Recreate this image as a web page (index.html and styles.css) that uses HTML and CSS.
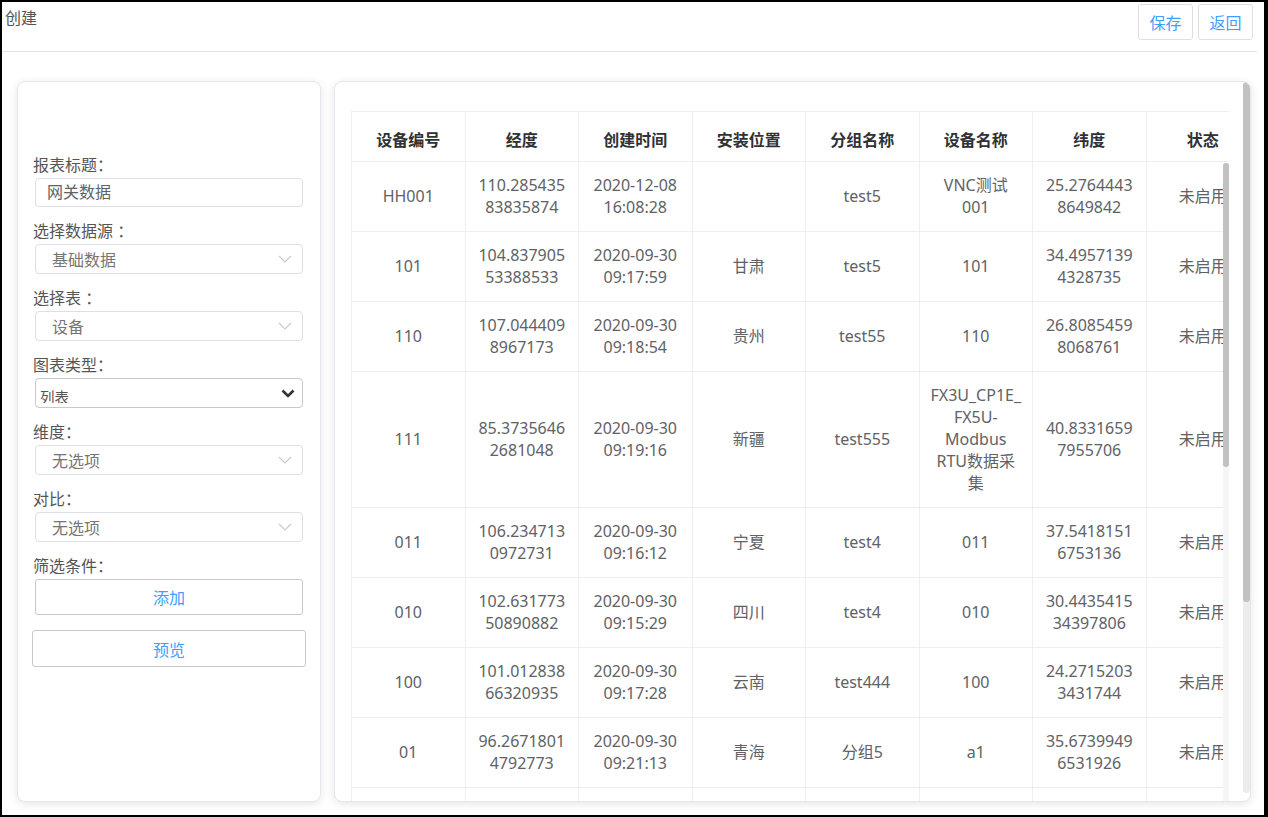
FILE: index.html
```html
<!DOCTYPE html>
<html lang="zh-CN">
<head>
<meta charset="utf-8">
<title>创建</title>
<link rel="stylesheet" href="styles.css">
</head>
<body>
<div class="frame">
  <div class="header">
    <div class="title">创建</div>
    <div class="actions">
      <button class="btn">保存</button>
      <button class="btn">返回</button>
    </div>
  </div>
  <div class="content">
    <div class="card left-card">
      <div class="group">
        <div class="label">报表标题：</div>
        <div class="input">网关数据</div>
      </div>
      <div class="group">
        <div class="label">选择数据源 ：</div>
        <div class="select"><span>基础数据</span><svg class="chev" width="14" height="8" viewBox="0 0 14 8"><path d="M1 1l6 6 6-6" fill="none" stroke="#c8cbd2" stroke-width="1.2"/></svg></div>
      </div>
      <div class="group">
        <div class="label">选择表 ：</div>
        <div class="select"><span>设备</span><svg class="chev" width="14" height="8" viewBox="0 0 14 8"><path d="M1 1l6 6 6-6" fill="none" stroke="#c8cbd2" stroke-width="1.2"/></svg></div>
      </div>
      <div class="group">
        <div class="label">图表类型：</div>
        <div class="native-select"><div class="native-val">列表</div><svg class="nchev" width="14" height="9" viewBox="0 0 14 9"><path d="M1.5 1.5l5.5 5.5 5.5-5.5" fill="none" stroke="#333" stroke-width="2.6"/></svg></div>
      </div>
      <div class="group">
        <div class="label">维度：</div>
        <div class="select"><span>无选项</span><svg class="chev" width="14" height="8" viewBox="0 0 14 8"><path d="M1 1l6 6 6-6" fill="none" stroke="#c8cbd2" stroke-width="1.2"/></svg></div>
      </div>
      <div class="group">
        <div class="label">对比：</div>
        <div class="select"><span>无选项</span><svg class="chev" width="14" height="8" viewBox="0 0 14 8"><path d="M1 1l6 6 6-6" fill="none" stroke="#c8cbd2" stroke-width="1.2"/></svg></div>
      </div>
      <div class="group last">
        <div class="label">筛选条件：</div>
        <button class="wide-btn">添加</button>
      </div>
      <button class="preview-btn">预览</button>
    </div>
    <div class="card right-card">
      <div class="table-wrap">
        <table class="grid">
          <colgroup><col><col><col><col><col><col><col><col></colgroup>
          <thead>
            <tr><th>设备编号</th><th>经度</th><th>创建时间</th><th>安装位置</th><th>分组名称</th><th>设备名称</th><th>纬度</th><th>状态</th></tr>
          </thead>
          <tbody>
            <tr><td>HH001</td><td>110.285435<br>83835874</td><td>2020-12-08<br>16:08:28</td><td></td><td>test5</td><td>VNC测试<br>001</td><td>25.2764443<br>8649842</td><td>未启用</td></tr>
            <tr><td>101</td><td>104.837905<br>53388533</td><td>2020-09-30<br>09:17:59</td><td>甘肃</td><td>test5</td><td>101</td><td>34.4957139<br>4328735</td><td>未启用</td></tr>
            <tr><td>110</td><td>107.044409<br>8967173</td><td>2020-09-30<br>09:18:54</td><td>贵州</td><td>test55</td><td>110</td><td>26.8085459<br>8068761</td><td>未启用</td></tr>
            <tr><td>111</td><td>85.3735646<br>2681048</td><td>2020-09-30<br>09:19:16</td><td>新疆</td><td>test555</td><td>FX3U_CP1E_<br>FX5U-<br>Modbus<br>RTU数据采<br>集</td><td>40.8331659<br>7955706</td><td>未启用</td></tr>
            <tr><td>011</td><td>106.234713<br>0972731</td><td>2020-09-30<br>09:16:12</td><td>宁夏</td><td>test4</td><td>011</td><td>37.5418151<br>6753136</td><td>未启用</td></tr>
            <tr><td>010</td><td>102.631773<br>50890882</td><td>2020-09-30<br>09:15:29</td><td>四川</td><td>test4</td><td>010</td><td>30.4435415<br>34397806</td><td>未启用</td></tr>
            <tr><td>100</td><td>101.012838<br>66320935</td><td>2020-09-30<br>09:17:28</td><td>云南</td><td>test444</td><td>100</td><td>24.2715203<br>3431744</td><td>未启用</td></tr>
            <tr><td>01</td><td>96.2671801<br>4792773</td><td>2020-09-30<br>09:21:13</td><td>青海</td><td>分组5</td><td>a1</td><td>35.6739949<br>6531926</td><td>未启用</td></tr>
            <tr class="blank"><td></td><td></td><td></td><td></td><td></td><td></td><td></td><td></td></tr>
          </tbody>
        </table>
        <div class="inner-track"><div class="inner-thumb"></div></div>
      </div>
      <div class="outer-track"><div class="outer-thumb"></div></div>
    </div>
  </div>
</div>
</body>
</html>
```
FILE: styles.css
```css
* { box-sizing: border-box; }
html, body { margin: 0; padding: 0; background: #fff; }
body {
  font-family: "Noto Sans", "Noto Sans CJK SC", sans-serif;
  font-size: 16px;
  color: #606266;
}
.frame {
  width: 1268px;
  height: 817px;
  border: 2px solid #000;
  border-right-width: 4px;
  background: #fff;
  display: flex;
  flex-direction: column;
  overflow: hidden;
}
.header {
  height: 50px;
  flex: none;
  margin-right: 7px;
  border-bottom: 1px solid #e4e4e4;
  display: flex;
  justify-content: space-between;
  align-items: flex-start;
  padding: 0 4px 0 3px;
}
.title {
  padding-top: 5px;
  line-height: 22px;
  font-size: 16px;
  color: #555;
}
.actions { display: flex; gap: 5px; padding-top: 2px; }
.btn {
  width: 55px;
  height: 36px;
  border: 1px solid #dcdfe6;
  border-radius: 3px;
  background: #fff;
  color: #409eff;
  font-family: inherit;
  font-size: 16px;
  padding: 0;
}
.content {
  display: flex;
  gap: 13px;
  padding: 29px 0 0 15px;
}
.card {
  height: 721px;
  border: 1px solid #e4e7ed;
  border-radius: 8px;
  background: #fff;
  box-shadow: 0 2px 10px rgba(0, 0, 0, 0.1);
}
.left-card {
  width: 304px;
  padding: 72px 15px 0 15px;
  display: flex;
  flex-direction: column;
}
.group { margin-bottom: 13px; }
.group.last { margin-bottom: 15px; }
.label {
  line-height: 22px;
  font-size: 16px;
  color: #555;
  margin-bottom: 2px;
}
.input, .select, .native-select {
  margin-left: 2px;
  width: 268px;
  height: 30px;
  border: 1px solid #dcdfe6;
  border-radius: 4px;
  background: #fff;
}
.input {
  height: 29px;
  padding-left: 11px;
  line-height: 27px;
  color: #606266;
  font-size: 16px;
}
.select {
  display: flex;
  align-items: center;
  justify-content: space-between;
  padding: 0 10px 0 16px;
  color: #757575;
  font-size: 16px;
}
.chev { display: block; }
.native-select {
  display: flex;
  justify-content: space-between;
  align-items: center;
  padding: 0 7px 4px 4px;
  border-color: #c9c9c9;
}
.native-val {
  height: 100%;
  overflow: hidden;
  padding-top: 9px;
  line-height: 18px;
  font-size: 14.5px;
  color: #555;
}
.nchev { display: block; margin-bottom: -4px; }
.wide-btn {
  margin-left: 2px;
  width: 268px;
  height: 36px;
  border: 1px solid #c9c9c9;
  border-radius: 3px;
  background: #fff;
  color: #409eff;
  font-family: inherit;
  font-size: 16px;
  padding: 0;
}
.preview-btn {
  margin-left: -1px;
  width: 274px;
  height: 37px;
  border: 1px solid #c9c9c9;
  border-radius: 3px;
  background: #fff;
  color: #409eff;
  font-family: inherit;
  font-size: 16px;
  padding: 0;
}
.right-card {
  width: 917px;
  position: relative;
  overflow: hidden;
  padding: 29px 0 0 16px;
}
.table-wrap {
  position: relative;
  width: 878px;
  height: 700px;
  overflow: hidden;
}
.grid {
  table-layout: fixed;
  width: 908px;
  border-collapse: collapse;
}
.grid col { width: 113.5px; }
.grid th, .grid td {
  border: 1px solid #ebeef5;
  text-align: center;
  white-space: nowrap;
  overflow: hidden;
}
.grid th {
  height: 50px;
  padding: 4px 6px 0;
  font-size: 16px;
  font-weight: 700;
  color: #303133;
}
.grid td {
  padding: 12px 4px 13px;
  line-height: 22px;
  font-size: 16px;
  color: #606266;
}
.grid tr.blank td { height: 70px; }
.inner-track {
  position: absolute;
  right: 0;
  top: 52px;
  bottom: 0;
  width: 6px;
  background: #f6f6f6;
}
.inner-thumb {
  width: 6px;
  height: 304px;
  border-radius: 3px;
  background: #c1c1c1;
}
.outer-track {
  position: absolute;
  right: 0;
  top: 0;
  bottom: 8px;
  width: 7px;
  border-radius: 4px;
  background: #ececec;
}
.outer-thumb {
  width: 7px;
  height: 520px;
  border-radius: 4px;
  background: #c1c1c1;
}
```
